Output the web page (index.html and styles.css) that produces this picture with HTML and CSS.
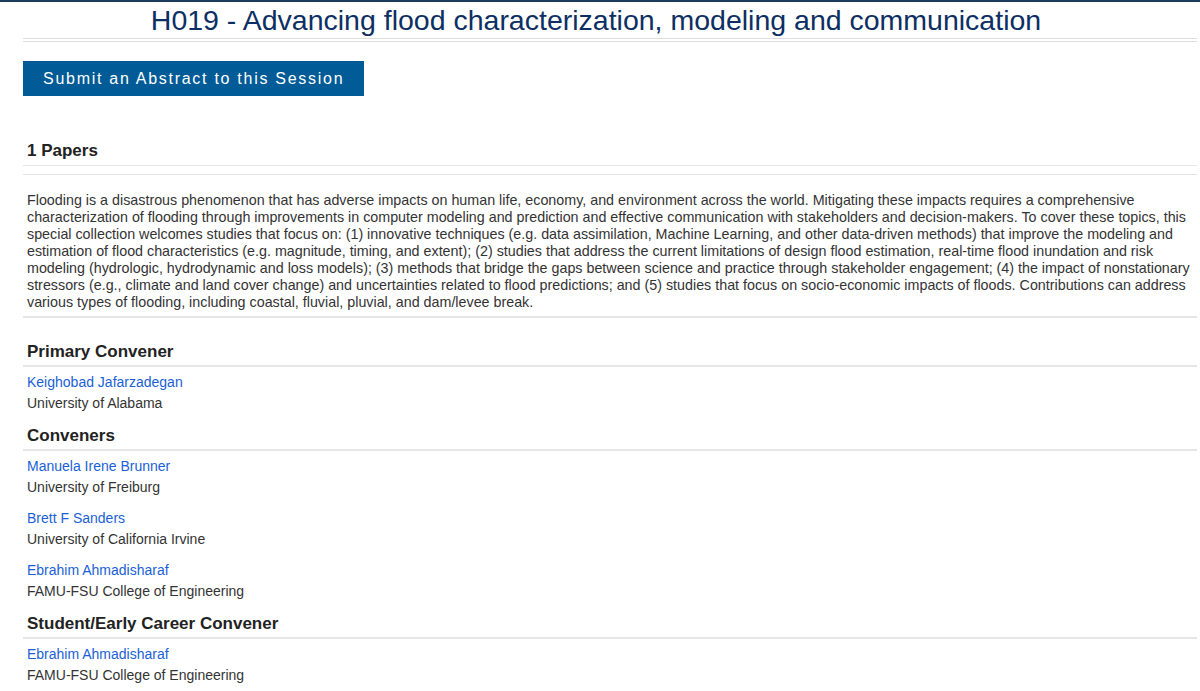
FILE: index.html
```html
<!DOCTYPE html>
<html lang="en">
<head>
    <meta charset="UTF-8">
    <title>H019 - Advancing flood characterization, modeling and communication</title>
    <link rel="stylesheet" href="styles.css">
</head>
<body>
<div class="topbar"></div>
<div class="container">
    <h1 class="session-title">H019 - Advancing flood characterization, modeling and communication</h1>

    <div class="submit-row">
        <a class="submit-btn" href="#">Submit an Abstract to this Session</a>
    </div>

    <h3 class="section-head papers">1 Papers</h3>

    <p class="description">Flooding is a disastrous phenomenon that has adverse impacts on human life, economy, and environment across the world. Mitigating these impacts requires a comprehensive characterization of flooding through improvements in computer modeling and prediction and effective communication with stakeholders and decision-makers. To cover these topics, this special collection welcomes studies that focus on: (1) innovative techniques (e.g. data assimilation, Machine Learning, and other data-driven methods) that improve the modeling and estimation of flood characteristics (e.g. magnitude, timing, and extent); (2) studies that address the current limitations of design flood estimation, real-time flood inundation and risk modeling (hydrologic, hydrodynamic and loss models); (3) methods that bridge the gaps between science and practice through stakeholder engagement; (4) the impact of nonstationary stressors (e.g., climate and land cover change) and uncertainties related to flood predictions; and (5) studies that focus on socio-economic impacts of floods. Contributions can address various types of flooding, including coastal, fluvial, pluvial, and dam/levee break.</p>

    <h3 class="section-head">Primary Convener</h3>
    <div class="person">
        <a href="#">Keighobad Jafarzadegan</a>
        <div class="inst">University of Alabama</div>
    </div>

    <h3 class="section-head">Conveners</h3>
    <div class="person">
        <a href="#">Manuela Irene Brunner</a>
        <div class="inst">University of Freiburg</div>
    </div>
    <div class="person">
        <a href="#">Brett F Sanders</a>
        <div class="inst">University of California Irvine</div>
    </div>
    <div class="person">
        <a href="#">Ebrahim Ahmadisharaf</a>
        <div class="inst">FAMU-FSU College of Engineering</div>
    </div>

    <h3 class="section-head">Student/Early Career Convener</h3>
    <div class="person">
        <a href="#">Ebrahim Ahmadisharaf</a>
        <div class="inst">FAMU-FSU College of Engineering</div>
    </div>
</div>
</body>
</html>
```

FILE: styles.css
```css
body {
    font-family: "Liberation Sans", Arial, sans-serif;
    margin: 0;
    padding: 0;
    background-color: #fff;
    color: #333;
}
.topbar {
    height: 2px;
    background-color: #1d3b5c;
}
.container {
    margin: 0 3px 0 23px;
}

.session-title {
    margin: 0;
    padding: 2px 28px 2px 0;
    font-size: 28.5px;
    font-weight: 400;
    line-height: 32px;
    text-align: center;
    color: #0d2f63;
    border-bottom: 4px double #dedede;
}

.submit-row {
    margin-top: 19px;
}
.submit-btn {
    display: inline-block;
    padding: 0 20px;
    height: 35px;
    line-height: 35px;
    background-color: #005b96;
    color: #fff;
    font-size: 16px;
    letter-spacing: 1.72px;
    text-decoration: none;
}

.section-head {
    margin: 0;
    padding: 0 4px 3px;
    font-size: 17px;
    font-weight: 700;
    line-height: 20px;
    color: #222;
    border-bottom: 2px solid #e6e6e6;
}
.papers {
    margin-top: 45px;
    padding-bottom: 4px;
    border-bottom-width: 1px;
}

.description {
    margin: 8px 0 0;
    padding: 17px 4px 5px;
    font-size: 14.3px;
    line-height: 17px;
    color: #333;
    border-top: 1px solid #e2e2e2;
    border-bottom: 2px solid #e6e6e6;
}
.description + .section-head {
    margin-top: 24px;
}

.person {
    padding: 5px 4px 0;
    font-size: 14px;
    line-height: 21px;
}
.person + .person {
    padding-top: 10px;
}
.person a {
    color: #1a5fd6;
    text-decoration: none;
}
.inst {
    color: #333;
}
.person + .section-head {
    margin-top: 12px;
}
```
